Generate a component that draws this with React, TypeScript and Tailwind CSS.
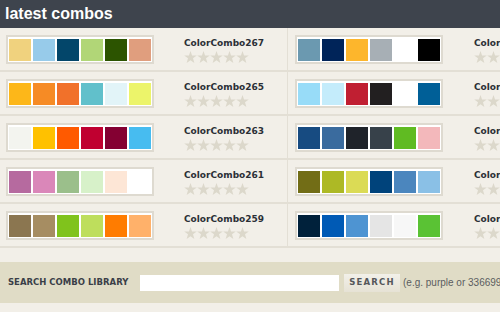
const combos: { name: string; colors: string[] }[] = [
  { name: 'ColorCombo267', colors: ['#f0d27e', '#97cbea', '#03466a', '#b1d677', '#2c5400', '#e09e7e'] },
  { name: 'ColorCombo266', colors: ['#6b99b0', '#002459', '#fdb62c', '#a7afb5', '#ffffff', '#000000'] },
  { name: 'ColorCombo265', colors: ['#fdb719', '#f68b25', '#f1712a', '#61c0cb', '#e2f4f8', '#ecf46a'] },
  { name: 'ColorCombo264', colors: ['#98dcf8', '#c4ecfb', '#c01f32', '#221f20', '#ffffff', '#005f97'] },
  { name: 'ColorCombo263', colors: ['#f3f4ef', '#ffc100', '#ff5a00', '#c00030', '#840032', '#47bcf0'] },
  { name: 'ColorCombo262', colors: ['#174b81', '#3a6b9e', '#1f232a', '#37414a', '#60bb22', '#f3b8bb'] },
  { name: 'ColorCombo261', colors: ['#b66a9f', '#da87b9', '#9bbf8b', '#d7f1c9', '#fde6d6', '#ffffff'] },
  { name: 'ColorCombo260', colors: ['#726d16', '#adb925', '#dbdb55', '#00437b', '#4b86be', '#8ac0e6'] },
  { name: 'ColorCombo259', colors: ['#8b7650', '#a68d62', '#80c31c', '#bede5c', '#ff7c00', '#ffb16a'] },
  { name: 'ColorCombo258', colors: ['#00213b', '#005ab5', '#4e94d2', '#e5e5e5', '#f7f7f7', '#5ac234'] },
];

function Stars() {
  return (
    <div className="flex mt-[2px]">
      {[0, 1, 2, 3, 4].map((i) => (
        <svg key={i} width="13" height="12" viewBox="0 0 24 23">
          <polygon
            points="12,0 15,8.5 24,8.7 16.8,14 19.4,23 12,17.6 4.6,23 7.2,14 0,8.7 9,8.5"
            fill="#dcd8cb"
          />
        </svg>
      ))}
    </div>
  );
}

function Combo({ name, colors, right }: { name: string; colors: string[]; right?: boolean }) {
  return (
    <div
      className={`h-[44px] border-b-2 border-[#e3dfd5] pt-[7px] flex ${
        right ? 'pl-[7px] gap-[31px]' : 'pl-[6px] gap-[30px] border-r border-r-[#e3dfd5]'
      }`}
    >
      <div className="flex gap-[2px] bg-white border-2 border-[#dedad0] pl-[1px] pr-[1px] pt-[2px] pb-[1px] h-[29px]">
        {colors.map((c, i) => (
          <div key={i} className="w-[22px] h-[22px]" style={{ backgroundColor: c }} />
        ))}
      </div>
      <div className="pt-[3px]">
        <div className="text-[9px] font-bold text-[#2b2f36] leading-[11px]" style={{ fontFamily: '"DejaVu Sans", sans-serif' }}>
          {name}
        </div>
        <Stars />
      </div>
    </div>
  );
}

export default function App() {
  return (
    <div className="w-[500px] h-[312px] overflow-hidden bg-[#f2efe8]">
      <div className="w-[600px]">
        <div className="h-[28px] bg-[#3e444d] pl-[5px] flex items-center">
          <h1 className="text-[16px] font-bold text-white leading-none" style={{ fontFamily: '"Liberation Sans", Arial, sans-serif' }}>
            latest combos
          </h1>
        </div>
        <div className="grid grid-cols-[288px_288px]">
          {combos.map((c, i) => (
            <Combo key={c.name} name={c.name} colors={c.colors} right={i % 2 === 1} />
          ))}
        </div>
        <div className="mt-[14px] h-[41px] bg-[#e0dcc6] flex items-center pl-[8px]">
          <span className="text-[8.5px] font-bold text-[#3a3f48] w-[132px]" style={{ fontFamily: '"DejaVu Sans", sans-serif' }}>
            SEARCH COMBO LIBRARY
          </span>
          <input className="w-[199px] h-[16px] bg-white outline-none" />
          <button
            className="ml-[5px] w-[56px] h-[18px] bg-gradient-to-b from-[#f2f0e9] to-[#e6e2d5] text-[8.5px] font-bold tracking-[1.2px] text-[#55575a]"
            style={{ fontFamily: '"DejaVu Sans", sans-serif' }}
          >
            SEARCH
          </button>
          <span className="ml-[3px] text-[10px] text-[#5b5d60]" style={{ fontFamily: '"Liberation Sans", Arial, sans-serif' }}>
            (e.g. purple or 336699)
          </span>
        </div>
      </div>
    </div>
  );
}
